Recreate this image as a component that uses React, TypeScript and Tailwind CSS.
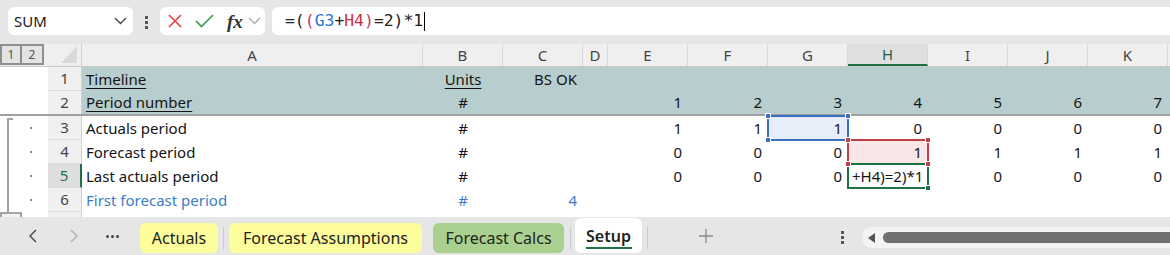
import React from 'react'

type Cell = {
  t: string
  align?: 'left' | 'center' | 'right'
  u?: boolean
  blue?: boolean
  mark?: 'blue' | 'red' | 'green'
}

type Row = { n: number; teal?: boolean; cells: Record<string, Cell> }

const COLS = ['A', 'B', 'C', 'D', 'E', 'F', 'G', 'H', 'I', 'J', 'K']

const WIDTH: Record<string, string> = {
  A: 'w-[341px]',
  B: 'w-[80px]',
  C: 'w-[80px]',
  D: 'w-[25px]',
  E: 'w-[80px]',
  F: 'w-[80px]',
  G: 'w-[80px]',
  H: 'w-[80px]',
  I: 'w-[80px]',
  J: 'w-[80px]',
  K: 'w-[80px]',
}

const nums = (vals: (number | string)[]): Record<string, Cell> => {
  const out: Record<string, Cell> = {}
  ;['E', 'F', 'G', 'H', 'I', 'J', 'K'].forEach((c, i) => {
    out[c] = { t: String(vals[i]), align: 'right' }
  })
  return out
}

const rows: Row[] = [
  {
    n: 1,
    teal: true,
    cells: {
      A: { t: 'Timeline', u: true },
      B: { t: 'Units', u: true, align: 'center' },
      C: { t: 'BS OK', align: 'right' },
    },
  },
  {
    n: 2,
    teal: true,
    cells: {
      A: { t: 'Period number', u: true },
      B: { t: '#', align: 'center' },
      ...nums([1, 2, 3, 4, 5, 6, 7]),
    },
  },
  {
    n: 3,
    cells: {
      A: { t: 'Actuals period' },
      B: { t: '#', align: 'center' },
      ...nums([1, 1, 1, 0, 0, 0, 0]),
      G: { t: '1', align: 'right', mark: 'blue' },
    },
  },
  {
    n: 4,
    cells: {
      A: { t: 'Forecast period' },
      B: { t: '#', align: 'center' },
      ...nums([0, 0, 0, 1, 1, 1, 1]),
      H: { t: '1', align: 'right', mark: 'red' },
    },
  },
  {
    n: 5,
    cells: {
      A: { t: 'Last actuals period' },
      B: { t: '#', align: 'center' },
      ...nums([0, 0, 0, '', 0, 0, 0]),
      H: { t: '+H4)=2)*1', align: 'left', mark: 'green' },
    },
  },
  {
    n: 6,
    cells: {
      A: { t: 'First forecast period', blue: true },
      B: { t: '#', align: 'center', blue: true },
      C: { t: '4', align: 'right', blue: true },
    },
  },
]

function Handle({ pos, color }: { pos: string; color: string }) {
  return <div className={`absolute z-10 h-[6px] w-[6px] border border-white ${pos} ${color}`} />
}

function Frame({ kind }: { kind: 'blue' | 'red' | 'green' }) {
  if (kind === 'blue') {
    return (
      <>
        <div className="absolute -top-[1px] -bottom-[1px] -left-[1px] -right-[1px] border-2 border-[#3b6fc6]" />
        <Handle pos="-left-[3px] -top-[3px]" color="bg-[#3b6fc6]" />
        <Handle pos="-right-[3px] -top-[3px]" color="bg-[#3b6fc6]" />
        <Handle pos="-left-[3px] -bottom-[3px]" color="bg-[#3b6fc6]" />
      </>
    )
  }
  if (kind === 'red') {
    return (
      <>
        <div className="absolute -top-[1px] -bottom-[1px] -left-[1px] -right-[1px] border-2 border-[#c43d48]" />
        <Handle pos="-left-[3px] -top-[3px]" color="bg-[#c43d48]" />
        <Handle pos="-right-[3px] -top-[3px]" color="bg-[#c43d48]" />
        <Handle pos="-left-[3px] -bottom-[3px]" color="bg-[#c43d48]" />
        <Handle pos="-right-[3px] -bottom-[3px]" color="bg-[#c43d48]" />
      </>
    )
  }
  return (
    <>
      <div className="absolute -top-[1px] -bottom-[1px] -left-[1px] -right-[1px] border-2 border-[#1e7145]" />
      <Handle pos="-right-[3px] -bottom-[3px]" color="bg-[#1e7145]" />
    </>
  )
}

function GridCell({ col, cell }: { col: string; cell?: Cell }) {
  const justify =
    cell?.align === 'right' ? 'justify-end pr-[6px]' : cell?.align === 'center' ? 'justify-center' : 'justify-start pl-[4px]'
  const fill = cell?.mark === 'blue' ? 'bg-[#e8eef9]' : cell?.mark === 'red' ? 'bg-[#f9e6e6]' : ''
  return (
    <div className={`relative flex shrink-0 items-center ${WIDTH[col]} ${justify} ${fill}`}>
      {cell && cell.t !== '' && (
        <span
          className={`whitespace-nowrap leading-none ${cell.blue ? 'text-[#3b7dc4]' : 'text-[#141414]'} ${
            cell.u ? 'underline decoration-1 underline-offset-[3px]' : ''
          }`}
        >
          {cell.t}
        </span>
      )}
      {cell?.mark && <Frame kind={cell.mark} />}
    </div>
  )
}

function Gutter({ n }: { n: number }) {
  if (n < 3) return <div className="w-[48px] shrink-0 bg-white" />
  return (
    <div className="flex w-[48px] shrink-0 bg-white">
      <div className={`ml-[7px] w-[6px] border-l-2 border-[#a3a3a3] ${n === 3 ? 'mt-[2px] border-t-2' : ''}`} />
      <div className="ml-[17px] flex items-center">
        <div className="h-[2px] w-[2px] bg-[#8a8a8a]" />
      </div>
    </div>
  )
}

function SheetRow({ row }: { row: Row }) {
  const selected = row.n === 5
  const height = row.n === 2 ? 'h-[25px] border-b-2 border-[#a0a0a0]' : 'h-[24px]'
  return (
    <div className={`flex ${height}`}>
      <Gutter n={row.n} />
      <div
        className={`flex w-[34px] shrink-0 items-center justify-center leading-none ${
          selected
            ? 'border-r-2 border-r-[#1e7145] bg-[#dedede] text-[#1e7145]'
            : 'border-r border-r-[#d0d0d0] bg-[#f0f0f0] text-[#444]'
        } ${row.n !== 2 ? 'border-b border-b-[#dcdcdc]' : ''}`}
      >
        {row.n}
      </div>
      <div className={`flex ${row.teal ? 'bg-[#b8cece]' : 'bg-white'}`}>
        {COLS.map((c) => (
          <GridCell key={c} col={c} cell={row.cells[c]} />
        ))}
        <div className="w-[10px]" />
      </div>
    </div>
  )
}

function FormulaBar() {
  return (
    <div className="flex h-[44px] items-start bg-[#e6e6e6]">
      <div className="ml-[8px] mt-[7px] flex h-[28px] w-[125px] items-center rounded-[6px] bg-white pl-[6px]">
        <span className="text-[15px] leading-none text-[#1a1a1a]">SUM</span>
        <svg className="ml-auto mr-[6px]" width="13" height="8" viewBox="0 0 13 8">
          <polyline points="1,1 6.5,6.5 12,1" fill="none" stroke="#444" strokeWidth="1.4" />
        </svg>
      </div>
      <div className="ml-[12px] mt-[16px] flex flex-col gap-[2px]">
        <div className="h-[3px] w-[3px] bg-[#555]" />
        <div className="h-[3px] w-[3px] bg-[#555]" />
        <div className="h-[3px] w-[3px] bg-[#555]" />
      </div>
      <div className="ml-[12px] mt-[7px] flex h-[28px] w-[105px] items-center rounded-[6px] bg-white">
        <svg className="ml-[8px]" width="14" height="14" viewBox="0 0 14 14">
          <path d="M1 1 L13 13 M13 1 L1 13" stroke="#e5474d" strokeWidth="1.7" fill="none" />
        </svg>
        <svg className="ml-[13px]" width="19" height="14" viewBox="0 0 19 14">
          <polyline points="1,7 6.5,12.5 18,1" fill="none" stroke="#3f9b52" strokeWidth="1.7" />
        </svg>
        <span className="ml-[13px] font-['Liberation_Serif',serif] text-[19px] font-bold italic leading-none text-[#333]">
          fx
        </span>
        <svg className="ml-[5px]" width="13" height="8" viewBox="0 0 13 8">
          <polyline points="1,1 6.5,6.5 12,1" fill="none" stroke="#a8a8a8" strokeWidth="1.3" />
        </svg>
      </div>
      <div className="ml-[7px] mt-[7px] flex h-[28px] flex-1 items-center rounded-l-[6px] bg-white pl-[13px]">
        <span className="font-['DejaVu_Sans_Mono',monospace] text-[16.4px] leading-none text-[#222]">
          =(<span className="text-[#bd3a6a]">(</span>
          <span className="text-[#2a77d0]">G3</span>+<span className="text-[#c9303f]">H4</span>
          <span className="text-[#bd3a6a]">)</span>=2)*1
        </span>
        <div className="ml-[1px] h-[19px] w-px bg-black" />
      </div>
    </div>
  )
}

function ColumnHeaders() {
  return (
    <div className="flex h-[23px] border-b border-[#c9c9c9] bg-[#efefef]">
      <div className="flex w-[48px] shrink-0 items-start">
        <div className="flex h-[21px] w-[22px] items-center justify-center border-2 border-[#8f8f8f] bg-[#e4e4e4] text-[12px] leading-none text-[#555]">
          1
        </div>
        <div className="flex h-[21px] w-[22px] items-center justify-center border-y-2 border-r-2 border-[#8f8f8f] bg-[#e4e4e4] text-[12px] leading-none text-[#555]">
          2
        </div>
      </div>
      <div className="flex w-[34px] shrink-0 items-end justify-end border-r border-[#d0d0d0] pb-[3px] pr-[4px]">
        <svg width="16" height="17" viewBox="0 0 16 17">
          <polygon points="16,0 16,17 0,17" fill="#dadada" />
        </svg>
      </div>
      {COLS.map((c) => (
        <div
          key={c}
          className={`flex shrink-0 items-center justify-center border-r border-[#d8d8d8] leading-none ${WIDTH[c]} ${
            c === 'H' ? 'border-b-2 border-b-[#1e7145] bg-[#dfdfdf] text-[#2f5a44]' : 'text-[#444]'
          }`}
        >
          {c}
        </div>
      ))}
    </div>
  )
}

function TabBar() {
  const tab = 'mt-[6px] flex h-[30px] shrink-0 items-center justify-center rounded-[6px] leading-none text-[#222]'
  return (
    <div className="flex h-[38px] items-start bg-[#e6e6e6] text-[16px]">
      <svg className="ml-[29px] mt-[12px]" width="8" height="14" viewBox="0 0 8 14">
        <polyline points="7,1 1,7 7,13" fill="none" stroke="#444" strokeWidth="1.4" />
      </svg>
      <svg className="ml-[33px] mt-[12px]" width="8" height="14" viewBox="0 0 8 14">
        <polyline points="1,1 7,7 1,13" fill="none" stroke="#b0b0b0" strokeWidth="1.4" />
      </svg>
      <div className="ml-[28px] mt-[18px] flex gap-[2px]">
        <div className="h-[3px] w-[3px] rounded-full bg-[#444]" />
        <div className="h-[3px] w-[3px] rounded-full bg-[#444]" />
        <div className="h-[3px] w-[3px] rounded-full bg-[#444]" />
      </div>
      <div className={`ml-[21px] w-[78px] bg-[#fdfd9c] ${tab}`}>Actuals</div>
      <div className="ml-[5px] mt-[10px] h-[22px] w-px bg-[#c9c9c9]" />
      <div className={`ml-[5px] w-[193px] bg-[#fdfd9c] ${tab}`}>Forecast Assumptions</div>
      <div className={`ml-[11px] w-[131px] bg-[#a9d08e] ${tab}`}>Forecast Calcs</div>
      <div className="ml-[6px] mt-[10px] h-[22px] w-px bg-[#c9c9c9]" />
      <div className="ml-[4px] mt-[1px] flex h-[35px] w-[67px] shrink-0 flex-col items-center rounded-[6px] bg-white pt-[8px]">
        <span className="text-[16px] font-semibold leading-[20px] text-[#222]">Setup</span>
        <div className="mt-[1px] h-[2px] w-[46px] bg-[#1e7145]" />
      </div>
      <div className="ml-[5px] mt-[10px] h-[22px] w-px bg-[#c9c9c9]" />
      <svg className="ml-[51px] mt-[12px]" width="14" height="14" viewBox="0 0 14 14">
        <path d="M7 0 V14 M0 7 H14" stroke="#8c8c8c" strokeWidth="1.3" />
      </svg>
      <div className="ml-[128px] mt-[14px] flex flex-col gap-[2px]">
        <div className="h-[3px] w-[3px] bg-[#555]" />
        <div className="h-[3px] w-[3px] bg-[#555]" />
        <div className="h-[3px] w-[3px] bg-[#555]" />
      </div>
      <div className="ml-[18px] mt-[10px] flex h-[21px] flex-1 items-center rounded-l-full bg-[#f4f4f4] pl-[6px]">
        <svg width="7" height="10" viewBox="0 0 7 10">
          <polygon points="7,0 7,10 0,5" fill="#555" />
        </svg>
        <div className="ml-[8px] h-[11px] flex-1 rounded-l-full bg-[#707070]" />
      </div>
    </div>
  )
}

export default function App() {
  return (
    <div className="h-[255px] w-[1170px] overflow-hidden bg-white font-['Noto_Sans',sans-serif] text-[15px]">
      <FormulaBar />
      <ColumnHeaders />
      {rows.map((r) => (
        <SheetRow key={r.n} row={r} />
      ))}
      <div className="flex h-[5px]">
        <div className="w-[48px] shrink-0">
          <div className="h-full w-[22px] border-x-2 border-t-2 border-[#a3a3a3] bg-[#f2f2f2]" />
        </div>
        <div className="w-[34px] shrink-0 border-r border-[#d0d0d0] bg-[#f0f0f0]" />
      </div>
      <TabBar />
    </div>
  )
}
